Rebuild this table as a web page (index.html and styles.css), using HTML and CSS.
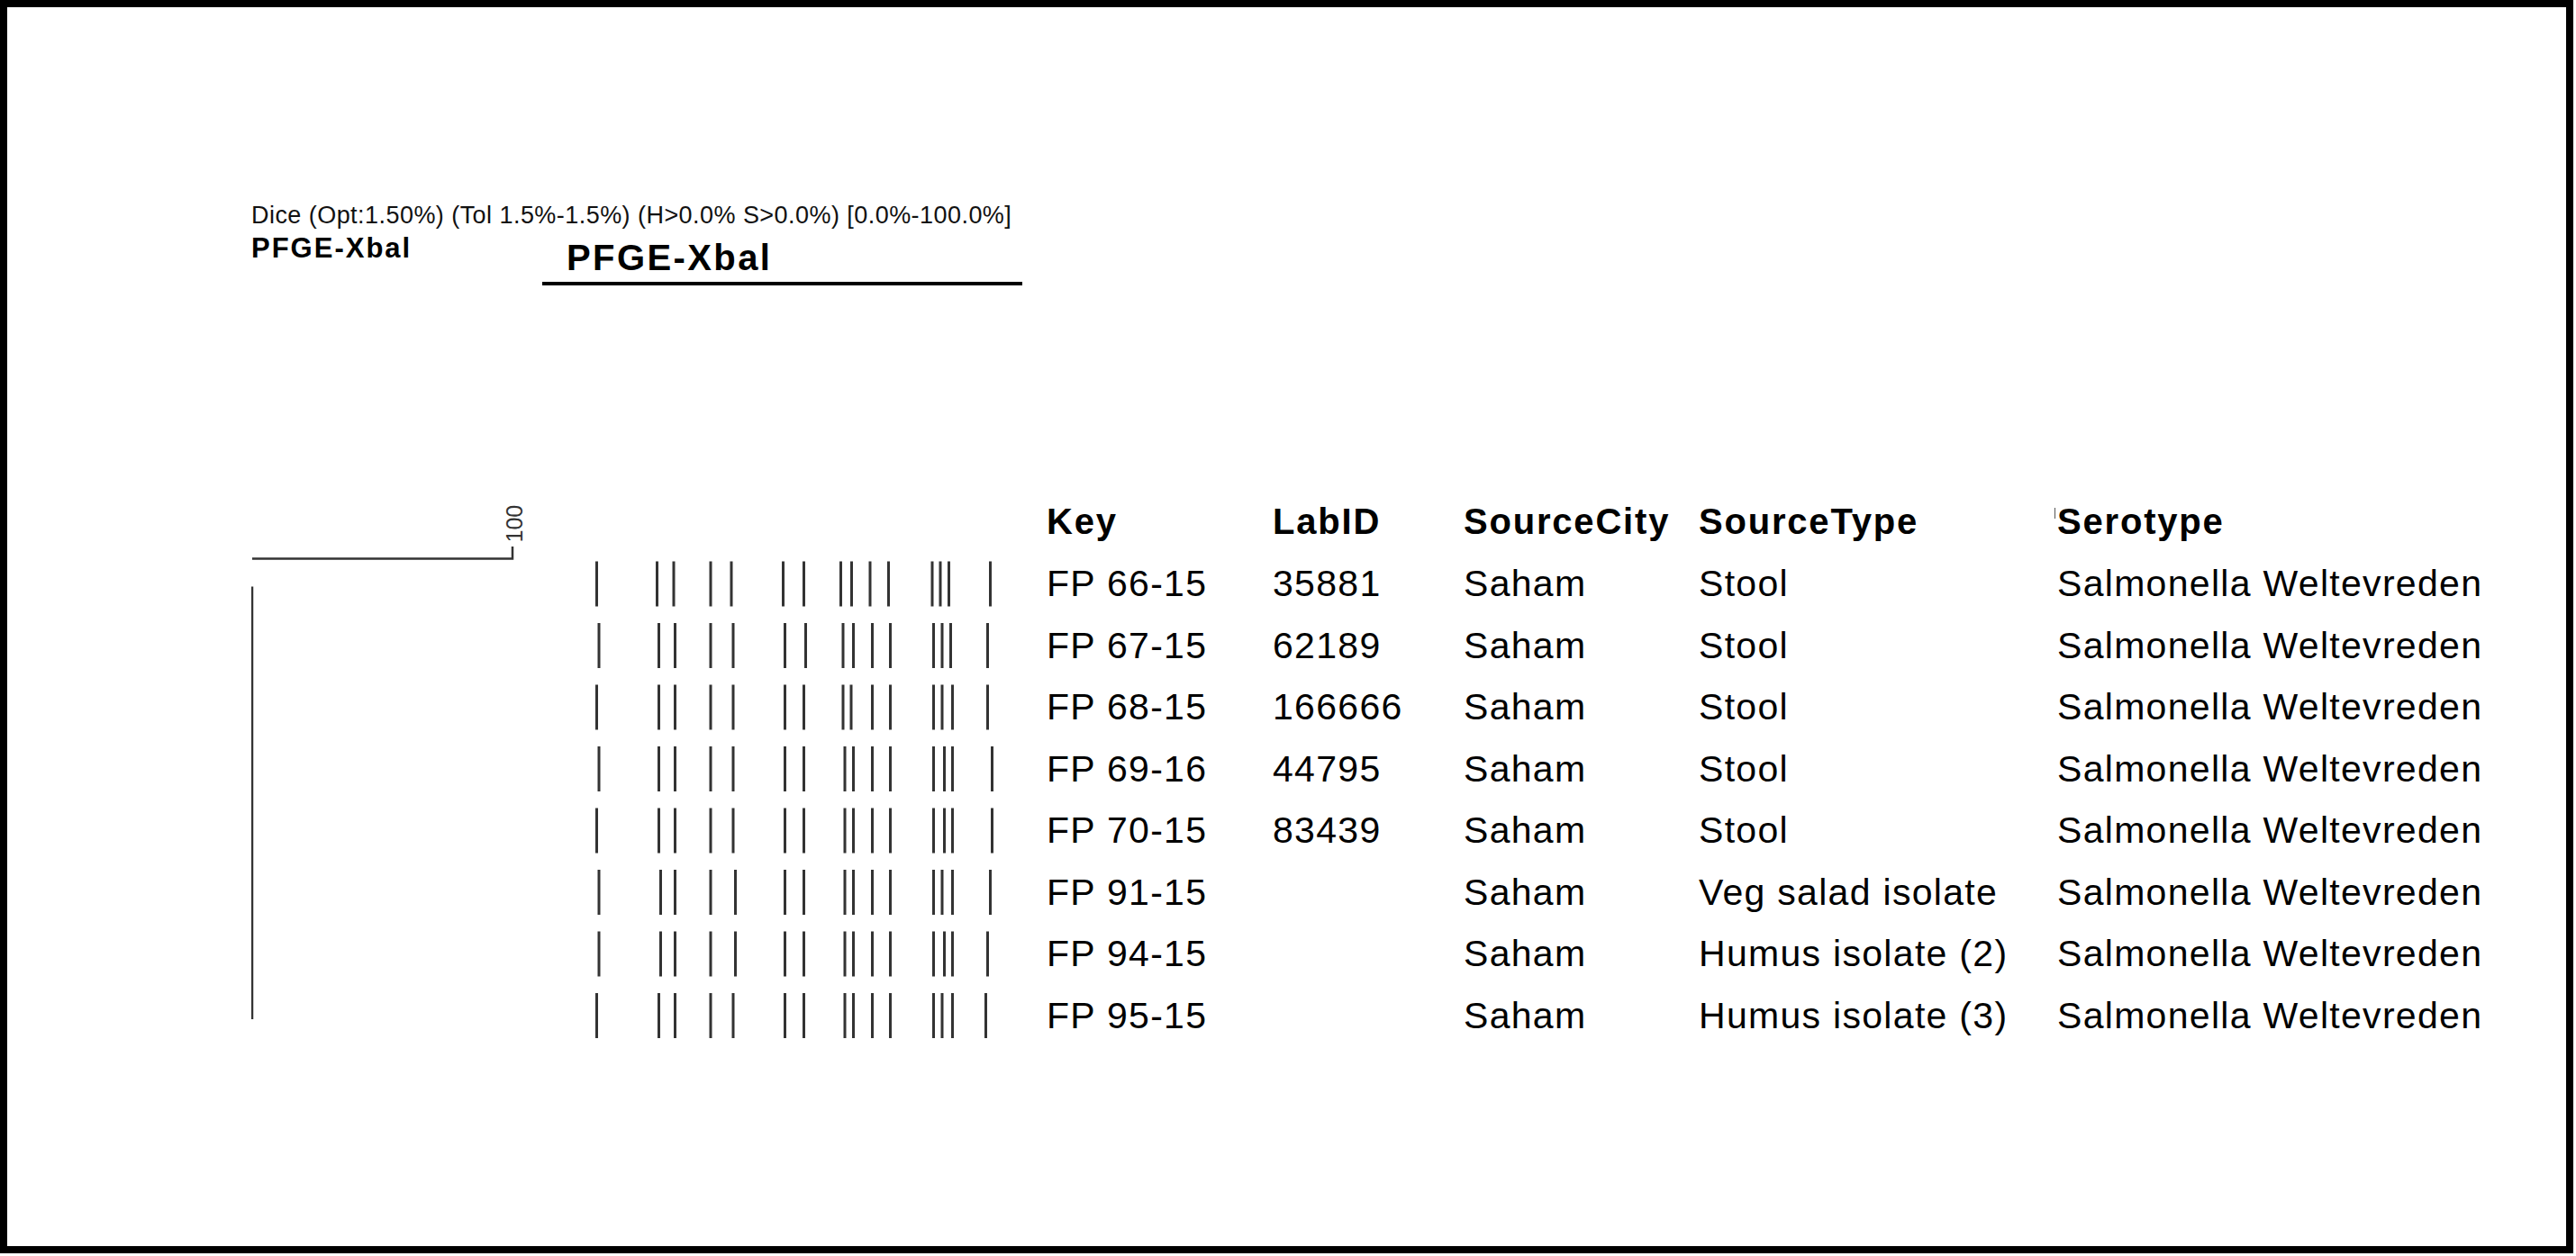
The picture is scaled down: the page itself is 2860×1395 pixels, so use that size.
FILE: index.html
```html
<!DOCTYPE html>
<html>
<head>
<meta charset="utf-8">
<title>PFGE-Xbal</title>
<link rel="stylesheet" href="styles.css">
</head>
<body>
<div class="frame">
  <div class="dice">Dice (Opt:1.50%) (Tol 1.5%-1.5%) (H&gt;0.0% S&gt;0.0%) [0.0%-100.0%]</div>
  <div class="titles">
    <div class="title-small">PFGE-Xbal</div>
    <div class="title-big">PFGE-Xbal</div>
  </div>
  <div class="main">
    <svg class="plot" width="883" height="615" viewBox="0 0 883 615">
      <g class="dendro">
        <path d="M1 76.5H290V63"/>
        <path d="M1 107.5V588"/>
      </g>
      <text class="scale" transform="translate(301 58.5) rotate(-90)">100</text>
      <g class="gel">
        <path transform="translate(0 79.5)" d="M383.5 0v50M450.5 0v50M469 0v50M510 0v50M533 0v50M590.5 0v50M613.5 0v50M654.5 0v50M666.5 0v50M687 0v50M707.5 0v50M756 0v50M765 0v50M774.5 0v50M820.5 0v50"/>
        <path transform="translate(0 148)" d="M386 0v50M452.5 0v50M470.5 0v50M510 0v50M535 0v50M592.5 0v50M615.5 0v50M657 0v50M668.5 0v50M689.5 0v50M709.5 0v50M757.5 0v50M767 0v50M776.5 0v50M817.5 0v50"/>
        <path transform="translate(0 216.5)" d="M383.5 0v50M452.5 0v50M470.5 0v50M510 0v50M535 0v50M592.5 0v50M613.5 0v50M657 0v50M666 0v50M689.5 0v50M709.5 0v50M757.5 0v50M767 0v50M778.5 0v50M817.5 0v50"/>
        <path transform="translate(0 285)" d="M386 0v50M452.5 0v50M470.5 0v50M510 0v50M535 0v50M592.5 0v50M613.5 0v50M659 0v50M668.5 0v50M689.5 0v50M709.5 0v50M757.5 0v50M769.5 0v50M778.5 0v50M822.5 0v50"/>
        <path transform="translate(0 353.5)" d="M383.5 0v50M452.5 0v50M470.5 0v50M510 0v50M535 0v50M592.5 0v50M613.5 0v50M659 0v50M668.5 0v50M689.5 0v50M709.5 0v50M757.5 0v50M769.5 0v50M778.5 0v50M822.5 0v50"/>
        <path transform="translate(0 422)" d="M386 0v50M454.5 0v50M470.5 0v50M510 0v50M537.5 0v50M592.5 0v50M613.5 0v50M659 0v50M668.5 0v50M689.5 0v50M709.5 0v50M757.5 0v50M767 0v50M778.5 0v50M820.5 0v50"/>
        <path transform="translate(0 490.5)" d="M386 0v50M454.5 0v50M470.5 0v50M510 0v50M537.5 0v50M592.5 0v50M613.5 0v50M659 0v50M668.5 0v50M689.5 0v50M709.5 0v50M757.5 0v50M769.5 0v50M778.5 0v50M817.5 0v50"/>
        <path transform="translate(0 559)" d="M383.5 0v50M452.5 0v50M470.5 0v50M510 0v50M535 0v50M592.5 0v50M613.5 0v50M659 0v50M668.5 0v50M689.5 0v50M709.5 0v50M757.5 0v50M767 0v50M778.5 0v50M815.5 0v50"/>
      </g>
    </svg>
    <div class="table">
      <div class="th">Key</div><div class="th">LabID</div><div class="th">SourceCity</div><div class="th">SourceType</div><div class="th sero">Serotype</div>
      <div class="td">FP 66-15</div><div class="td">35881</div><div class="td">Saham</div><div class="td">Stool</div><div class="td">Salmonella Weltevreden</div>
      <div class="td">FP 67-15</div><div class="td">62189</div><div class="td">Saham</div><div class="td">Stool</div><div class="td">Salmonella Weltevreden</div>
      <div class="td">FP 68-15</div><div class="td">166666</div><div class="td">Saham</div><div class="td">Stool</div><div class="td">Salmonella Weltevreden</div>
      <div class="td">FP 69-16</div><div class="td">44795</div><div class="td">Saham</div><div class="td">Stool</div><div class="td">Salmonella Weltevreden</div>
      <div class="td">FP 70-15</div><div class="td">83439</div><div class="td">Saham</div><div class="td">Stool</div><div class="td">Salmonella Weltevreden</div>
      <div class="td">FP 91-15</div><div class="td"></div><div class="td">Saham</div><div class="td">Veg salad isolate</div><div class="td">Salmonella Weltevreden</div>
      <div class="td">FP 94-15</div><div class="td"></div><div class="td">Saham</div><div class="td">Humus isolate (2)</div><div class="td">Salmonella Weltevreden</div>
      <div class="td">FP 95-15</div><div class="td"></div><div class="td">Saham</div><div class="td">Humus isolate (3)</div><div class="td">Salmonella Weltevreden</div>
    </div>
  </div>
</div>
</body>
</html>
```
FILE: styles.css
```css
html, body {
  margin: 0;
  padding: 0;
  background: #fff;
}
body {
  font-family: "Liberation Sans", Arial, sans-serif;
  color: #000;
}
.frame {
  box-sizing: border-box;
  width: 2857px;
  height: 1392px;
  border: 8px solid #000;
  padding: 215px 0 0 271px;
}
.dice {
  font-size: 27px;
  line-height: 32px;
  letter-spacing: 0.45px;
  color: #111;
  white-space: nowrap;
}
.titles {
  display: flex;
  align-items: flex-start;
}
.title-small {
  flex: 0 0 323px;
  margin-top: 2.5px;
  font-size: 31px;
  line-height: 36px;
  font-weight: bold;
  letter-spacing: 2px;
}
.title-big {
  width: 506px;
  padding-left: 27px;
  padding-bottom: 4px;
  border-bottom: 4px solid #000;
  margin-top: 7.5px;
  font-size: 40px;
  line-height: 46px;
  font-weight: bold;
  letter-spacing: 2.4px;
}
.main {
  display: flex;
  align-items: flex-start;
  margin-top: 227.5px;
}
.plot {
  flex: 0 0 883px;
  display: block;
}
.dendro path {
  fill: none;
  stroke: #333;
  stroke-width: 2.5;
}
.gel path {
  fill: none;
  stroke: #333;
  stroke-width: 3;
}
.scale {
  font-family: "Liberation Sans", Arial, sans-serif;
  font-size: 25px;
  fill: #333;
}
.table {
  display: grid;
  grid-template-columns: 251px 212px 261px 398px auto;
  font-size: 41px;
  letter-spacing: 1.3px;
  white-space: nowrap;
}
.th {
  font-weight: bold;
  font-size: 40px;
  line-height: 70px;
  letter-spacing: 1.8px;
}
.td {
  line-height: 68.5px;
}
.sero::before {
  content: "";
  display: inline-block;
  width: 1px;
  height: 12px;
  background: #555;
  vertical-align: top;
  margin: 20px 2px 0 -3px;
}
```
